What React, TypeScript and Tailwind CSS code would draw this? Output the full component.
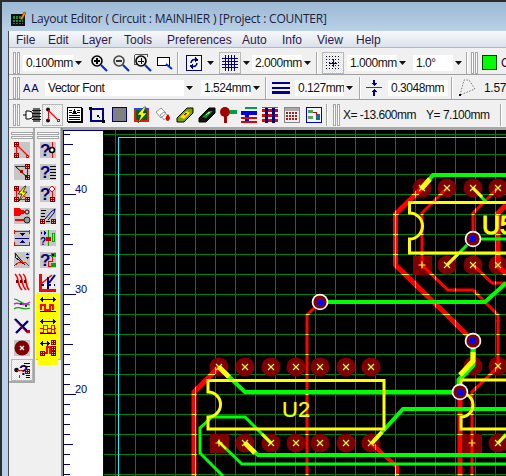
import React from "react";

const font = { fontFamily: '"Liberation Sans", Arial, sans-serif' };

const S = ({ children, w = 16, h = 16, bg, className = "" }: { children?: React.ReactNode; w?: number; h?: number; bg?: string; className?: string }) => (
  <svg width={w} height={h} viewBox={`0 0 ${w} ${h}`} shapeRendering="crispEdges" className={`shrink-0 overflow-visible ${className}`}>
    {bg && <rect width={w} height={h} fill={bg} />}
    {children}
  </svg>
);
const R = ({ x, y, w, h, f }: { x: number; y: number; w: number; h: number; f: string }) => <rect x={x} y={y} width={w} height={h} fill={f} />;
const L = ({ d, c, sw = 1, aa }: { d: string; c: string; sw?: number; aa?: boolean }) => (
  <path d={d} stroke={c} strokeWidth={sw} fill="none" shapeRendering={aa ? "auto" : "crispEdges"} />
);
const Pad = ({ x, y }: { x: number; y: number }) => (
  <g>
    <rect x={x} y={y} width={5} height={5} fill="#800000" />
    <rect x={x + 1} y={y + 1} width={1} height={1} fill="#e0b0b0" />
    <rect x={x + 3} y={y + 1} width={1} height={1} fill="#e0b0b0" />
    <rect x={x + 1} y={y + 3} width={1} height={1} fill="#e0b0b0" />
    <rect x={x + 3} y={y + 3} width={1} height={1} fill="#e0b0b0" />
  </g>
);
const Q = ({ x = 0, y = 14, s = 17 }: { x?: number; y?: number; s?: number }) => (
  <text x={x} y={y} fontFamily="Liberation Sans" fontWeight={700} fontSize={s} fill="#000080" shapeRendering="auto">?</text>
);
const GR = "#c6c6c6";

const leftA: React.ReactNode[] = [
  <S bg={GR}><Pad x={0} y={0} /><Pad x={0} y={11} /><L d="M3 3L14 14" c="#f00" sw={1.3} aa /><L d="M2 3V13" c="#f00" /><R x={12} y={13} w={3} h={3} f="#f00" /><R x={13} y={14} w={1} h={1} f="#fff" /></S>,
  <S bg={GR}><Pad x={11} y={0} /><Pad x={11} y={11} /><L d="M1 2L14 14" c="#000" sw={1} aa /><L d="M1 2H12M13 4V12" c="#333" /><R x={6} y={6} w={3} h={3} f="#a00" /></S>,
  <S bg={GR}><Pad x={0} y={0} /><Pad x={0} y={11} /><Pad x={11} y={11} /><L d="M2 4V12M4 13H12M3 3L12 12" c="#f00" /><path d="M11 0L4 8H8L5 15L13 6H9L12 0Z" fill="#ff0" stroke="#000" strokeWidth={0.7} shapeRendering="auto" /></S>,
  <S bg={GR}><R x={0} y={0} w={6} h={8} f="#f00" /><path d="M6 1L11 3V5L6 7Z" fill="#f00" /><circle cx={13} cy={4} r={2} fill={GR} stroke="#400" shapeRendering="auto" /><R x={1} y={11} w={10} h={2} f="#f00" /><circle cx={13} cy={12} r={3} fill="#999" stroke="#222" shapeRendering="auto" /></S>,
  <S bg={GR}><L d="M0 1H16M0 15H16M0 0V4M15 0V4M0 12V16M15 12V16" c="#f00" /><path d="M8 6L5 3H11ZM8 10L5 13H11Z" fill="#000080" /><L d="M1 8H15" c="#000080" /></S>,
  <S bg={GR}><L d="M1 1L11 13" c="#000" sw={1} aa /><L d="M1 1V5M1 5L11 13" c="#222" /><L d="M0 14L5 10H11L15 14" c="#f00" /><path d="M13 1L11 3H15ZM13 7L11 5H15Z" fill="#000080" /></S>,
  <S><L d="M1 0C6 4 2 10 8 16M5 0C10 4 6 10 12 16M9 0C14 4 10 10 15 16" c="#f00" sw={1.6} aa /><R x={2} y={6} w={2} h={3} f="#700" /><R x={6} y={6} w={2} h={3} f="#700" /><R x={10} y={6} w={2} h={3} f="#700" /></S>,
  <S><L d="M0 3C5 3 7 9 16 9" c="#0a0" sw={1.2} aa /><L d="M0 8C5 5 9 12 16 6" c="#f0f" sw={1.5} aa /><L d="M0 13C5 9 9 15 16 12" c="#0a0" sw={1.2} aa /><R x={6} y={7} w={2} h={2} f="#333" /><R x={11} y={9} w={2} h={2} f="#333" /></S>,
  <S><L d="M1 1L14 14M14 3L2 15" c="#000080" sw={2.4} aa /><L d="M0 1L13 15" c="#f00" sw={0.8} aa /><R x={13} y={12} w={3} h={3} f="#c00" /></S>,
  <S bg={GR}><circle cx={8} cy={8} r={7.5} fill="#800000" shapeRendering="auto" /><L d="M6 6L10 10M10 6L6 10" c="#fff" sw={1.3} aa /></S>,
];
const leftB: React.ReactNode[] = [
  <S bg={GR}><Q /><L d="M12 0V16" c="#f00" /><circle cx={12} cy={8} r={2.5} fill="#fff" stroke="#000" strokeWidth={1.6} shapeRendering="auto" /></S>,
  <S bg={GR}><Q /><L d="M10 2H16M10 5H16M10 8H16M10 11H16M10 14H16" c="#000" /></S>,
  <S bg={GR}><Q /><path d="M12 0L15 3L12 6L9 3Z" fill="#fff" stroke="#f00" /><L d="M12 6V11" c="#f00" /><Pad x={10} y={11} /></S>,
  <S bg={GR}><L d="M1 2H6M1 5H5M1 8H5" c="#000" /><Pad x={0} y={11} /><Pad x={11} y={11} /><L d="M6 13H10" c="#000" /><L d="M5 11L12 3L15 1L14 5L8 12" c="#000080" aa /></S>,
  <S bg={GR}><path d="M0 3L2 1V5ZM6 3L4 1V5Z" fill="#000080" /><Q x={0} y={15} s={10} /><L d="M8 0V16" c="#0a0" /><R x={6} y={7} w={5} h={4} f="#c00" /><R x={12} y={3} w={3} h={9} f="#0a0" /><R x={13} y={4} w={1} h={7} f={GR} /></S>,
  <S bg={GR}><Q /><L d="M9 3H12V9H8V14H12" c="#f00" /><R x={11} y={1} w={5} h={4} f="#0a0" /><R x={11} y={11} w={5} h={4} f="#0a0" /><R x={12} y={2} w={2} h={2} f="#111" /></S>,
  <S bg="#e8e8e8"><L d="M0 0V16H16" c="#f00" sw={3} /><L d="M1 10L12 1" c="#f00" sw={1.5} aa /><L d="M9 9L15 1" c="#000080" sw={2} aa /><L d="M1 11H15M8 3V15" c="#000080" sw={1.5} /><R x={4} y={10} w={3} h={3} f="#fff" /><R x={11} y={10} w={3} h={3} f="#fff" /></S>,
];
const Arrow = ({ w = 16 }: { w?: number }) => (
  <g>
    <R x={2} y={3} w={w - 4} h={1} f="#000" />
    <path d={`M0 3.5L3 0.5V6.5Z M${w} 3.5L${w - 3} 0.5V6.5Z`} fill="#000" />
  </g>
);
const yellow: React.ReactNode[] = [
  <S><Arrow /><L d="M0 15H16" c="#000" /><L d="M1 14V9H5V14H10V9H13V14" c="#f00" sw={1.4} /></S>,
  <S><Arrow /><L d="M0 15H16" c="#000" /><L d="M0 10H3V7H7V10H11V7H14V10H16" c="#f00" /><L d="M0 14H3V11H7V14H11V11H14V14H16" c="#f00" /></S>,
  <S><Arrow w={10} /><Pad x={11} y={0} /><Pad x={11} y={6} /><Pad x={0} y={11} /><Pad x={11} y={11} /><L d="M5 13H7V7H10V13H11" c="#f00" sw={1.4} /></S>,
];
const hotQ = (
  <S><Q x={5} y={13} s={15} /><circle cx={2.5} cy={8} r={2.3} fill="#111" shapeRendering="auto" /><L d="M3 8H9" c="#f00" /><L d="M10 1H16M10 4H16M12 13H16M12 15H16" c="#000" /><Pad x={11} y={7} /><L d="M5 13V16" c="#f00" /></S>
);

const Grip = () => (
  <div className="flex gap-px shrink-0 h-[22px] self-center">
    <div className="w-[3px] border border-[#a6a6a6] bg-white" />
    <div className="w-[3px] border border-[#a6a6a6] bg-white" />
  </div>
);
const HGrip = () => (
  <div className="flex flex-col gap-px w-[22px] self-center mt-[4px] shrink-0">
    <div className="h-[3px] border border-[#a6a6a6] bg-white" />
    <div className="h-[3px] border border-[#a6a6a6] bg-white" />
  </div>
);
const Sep = () => <div className="w-[2px] h-[22px] self-center bg-[#a8a8a8] border-r border-white shrink-0" />;
const Tri = () => (
  <svg width={7} height={4} viewBox="0 0 7 4" className="shrink-0"><path d="M0 0H7L3.5 4Z" fill="#111" /></svg>
);
const Combo = ({ label, w, ml = 0 }: { label: string; w: string; ml?: number }) => (
  <div className={`flex h-[16px] shrink-0 bg-white items-center ${w}`} style={{ marginLeft: ml }}>
    <span className="flex-1 pl-[3px] text-[12px] tracking-[-0.45px] text-[#111] leading-none whitespace-nowrap overflow-hidden">{label}</span>
    <span className="w-[10px] h-full bg-[#f0f0f0] flex items-center justify-center shrink-0"><Tri /></span>
  </div>
);
const Hot = ({ children, w = "w-[22px]", h = "h-[22px]" }: { children: React.ReactNode; w?: string; h?: string }) => (
  <div className={`${w} ${h} shrink-0 flex items-center justify-center border border-[#b8b8b8] bg-[repeating-conic-gradient(#ffffff_0_25%,#e2e2e2_0_50%)] bg-[length:2px_2px]`}>{children}</div>
);
const Lens = ({ mark, c = "#000", extra }: { mark: React.ReactNode; c?: string; extra?: React.ReactNode }) => (
  <S w={18} h={18}>
    {extra}
    <circle cx={7} cy={7} r={5} fill="#e8e8e8" stroke={c} strokeWidth={1.6} shapeRendering="auto" />
    {mark}
    <L d="M11 11L17 17" c="#0033cc" sw={2.2} aa />
  </S>
);

const Row1 = () => (
  <div className="flex items-center h-[25px] mt-[2px] pt-px border-b border-[#a0a0a0] pl-[4px] shrink-0 overflow-hidden">
    <Grip />
    <div className="w-[3px] shrink-0" />
    <Combo label="0.100mm" w="w-[60px]" />
    <div className="flex items-center gap-[4px] ml-[7px]">
      <Lens mark={<L d="M4 7H10M7 4V10" c="#000" sw={1.6} />} />
      <Lens c="#444" mark={<L d="M4 7H10" c="#333" sw={1.6} />} />
      <Lens extra={<L d="M0.5 0.5H13V3M0.5 0.5V10H3" c="#555" />} mark={<L d="M4 7H10M7 4V10" c="#000" />} />
      <S w={18} h={18}><path d="M1 3H13V11H1Z" fill="#fff" stroke="#000" /><L d="M10 10L16 15" c="#0033cc" sw={2} aa /></S>
    </div>
    <div className="ml-[3px]"><Sep /></div>
    <S className="ml-[7px]"><path d="M0.5 0.5H15.5V15.5H0.5Z" fill="#f4f4ff" stroke="#000080" /><L d="M5 8C5 5 8 4 10 5M11 8C11 11 8 12 6 11" c="#000080" sw={1.5} aa /><path d="M9 2L13 5L9 7ZM7 9L3 11L7 14Z" fill="#000080" /></S>
    <div className="ml-[5px] mr-[5px]"><Tri /></div>
    <Hot>
      <S><L d="M3 0V16M6 0V16M9 0V16M12 0V16M0 3H16M0 6H16M0 9H16M0 12H16" c="#000080" /></S>
    </Hot>
    <div className="ml-[2px] mr-[2px]"><Tri /></div>
    <Combo label="2.000mm" w="w-[60px]" />
    <div className="ml-[4px]"><Sep /></div>
    <div className="ml-[4px]"><Hot>
      <svg width={16} height={16} viewBox="0 0 16 16" shapeRendering="crispEdges">
        {[1, 4, 7, 10, 13].flatMap((x) => [1, 4, 7, 10, 13].map((y) => <rect key={`${x}-${y}`} x={x} y={y} width={1} height={1} fill="#000080" />))}
        <L d="M8 4V12M4 8H12" c="#000080" />
      </svg>
    </Hot></div>
    <Combo label="1.000mm" w="w-[60px]" ml={3} />
    <Combo label="1.0°" w="w-[50px]" ml={6} />
    <div className="ml-[3px]"><Sep /></div>
    <div className="ml-[3px]"><Grip /></div>
    <div className="w-[15px] h-[15px] bg-[#00ff00] border border-[#004000] ml-[4px] shrink-0" />
    <span className="ml-[4px] text-[12px] text-[#111] whitespace-nowrap">C</span>
  </div>
);

const Row2 = () => (
  <div className="flex items-center h-[25px] pt-[2px] border-b border-[#a0a0a0] pl-[4px] shrink-0 overflow-hidden">
    <Grip />
    <span className="w-[19px] ml-[3px] shrink-0 text-[11px] tracking-[1px] text-[#000080] leading-none">AA</span>
    <div className="w-[3px] shrink-0" />
    <Combo label="Vector Font" w="w-[149px]" />
    <Combo label="1.524mm" w="w-[60px]" ml={7} />
    <div className="ml-[4px]"><Sep /></div>
    <S w={18} h={14} className="ml-[5px]"><R x={0} y={1} w={18} h={2} f="#000080" /><R x={0} y={6} w={18} h={2} f="#000080" /><R x={0} y={10} w={18} h={3} f="#000080" /></S>
    <Combo label="0.127mm" w="w-[59px]" ml={5} />
    <div className="ml-[5px]"><Sep /></div>
    <S className="ml-[5px]"><R x={0} y={7} w={16} h={1} f="#e00000" /><path d="M8 6L5 3H11Z" fill="#000080" /><R x={7} y={0} w={2} h={3} f="#000080" /><path d="M8 9L5 12H11Z" fill="#000080" /><R x={7} y={12} w={2} h={4} f="#000080" /></S>
    <div className="ml-[6px] h-[16px] w-[60px] bg-white shrink-0 flex items-center pl-[3px] text-[12px] tracking-[-0.45px] text-[#111] leading-none">0.3048mm</div>
    <div className="ml-[3px]"><Sep /></div>
    <S w={18} h={18} className="ml-[5px]"><path d="M2 16L6 1H11L17 10L2 16" fill="none" stroke="#777" strokeDasharray="1.5 1.5" shapeRendering="auto" /><R x={1} y={15} w={2} h={2} f="#000" /></S>
    <span className="ml-[8px] text-[12px] tracking-[-0.3px] text-[#111] leading-none whitespace-nowrap">1.57</span>
  </div>
);

const Row3 = () => (
  <div className="flex items-center h-[27px] pt-[2px] pl-[4px] shrink-0 overflow-hidden">
    <Grip />
    <S w={18} className="ml-[3px]"><path d="M0 8H3M3 4H6A4 4 0 0 1 6 12H3Z" fill="#fff" stroke="#000" shapeRendering="auto" /><R x={10} y={1} w={7} h={14} f="#666" /><L d="M9 3H18M9 6H18M9 9H18M9 12H18" c="#111" /></S>
    <div className="ml-[1px]"><Hot w="w-[21px]">
      <S><circle cx={3} cy={2.5} r={2} fill="#111" shapeRendering="auto" /><circle cx={3} cy={13.5} r={2} fill="#111" shapeRendering="auto" /><L d="M3 3V13" c="#e00" /><L d="M3 3L13 13" c="#e00" sw={1.3} aa /><R x={12} y={12} w={3} h={3} f="#e00" /><R x={13} y={13} w={1} h={1} f="#fff" /></S>
    </Hot></div>
    <S className="ml-[4px]"><path d="M0.5 0.5H14.5V14.5H0.5Z" fill="#fff" stroke="#000" /><R x={15} y={1} w={1} h={15} f="#000" /><R x={1} y={15} w={15} h={1} f="#000" /><path d="M5 7L7.5 2L10 7Z" fill="#000" /><L d="M2 8H13M2 10H13M2 12H13" c="#000" /><L d="M2 3H5M2 5H5M10 3H13M10 5H13" c="#000" /></S>
    <S className="ml-[6px]"><L d="M2 2H14V14H2Z" c="#000080" sw={1.5} /><R x={0} y={0} w={3} h={3} f="#000" /><R x={13} y={13} w={3} h={3} f="#000" /><L d="M8 8L11 11M8 8H10M8 8V10" c="#000" /></S>
    <S w={15} h={15} className="ml-[7px]"><R x={0} y={0} w={15} h={15} f="#000080" /><R x={1} y={1} w={13} h={13} f="#808080" /></S>
    <S w={17} className="ml-[6px]"><R x={1} y={1} w={15} h={14} f="#e02000" /><R x={3} y={3} w={11} h={10} f="#006030" /><L d="M1 1H16" c="#2040ff" /><path d="M11 0L4 8H8L5 16L14 6H10L13 0Z" fill="#ffff00" stroke="#000" strokeWidth={0.5} shapeRendering="auto" /></S>
    <S className="ml-[5px]"><path d="M1 5L6 1L11 6L6 11Z" fill="#fff" stroke="#999" shapeRendering="auto" /><path d="M5 8L9 5L13 9L9 13Z" fill="none" stroke="#999" shapeRendering="auto" /><path d="M13 7C15 10 16 12 13 14C10 14 10 10 13 7Z" fill="#e00000" shapeRendering="auto" /></S>
    <S className="ml-[6px]"><path d="M0 11L10 1H16V6L7 15L0 15Z" fill="#7da000" stroke="#000" shapeRendering="auto" /><path d="M3 10L10 4L13 6L7 12Z" fill="#ffe000" shapeRendering="auto" /><L d="M7 8L10 6" c="#c00" /></S>
    <S className="ml-[6px]"><path d="M0 11L10 1H16V6L7 15L0 15Z" fill="#111" stroke="#000" shapeRendering="auto" /><path d="M3 10L10 4L14 4L7 11Z" fill="#109030" shapeRendering="auto" /><L d="M7 8L11 5" c="#8f8" /></S>
    <S className="ml-[5px]"><circle cx={5} cy={5} r={5} fill="#a00000" shapeRendering="auto" /><R x={4} y={8} w={3} h={8} f="#a00000" /><R x={10} y={3} w={7} h={4} f="#00a040" /></S>
    <S className="ml-[5px]"><R x={4} y={0} w={12} h={2} f="#00a040" /><R x={0} y={4} w={16} h={4} f="#0000e0" /><R x={4} y={4} w={4} h={12} f="#0000e0" /><R x={0} y={10} w={16} h={2} f="#e00000" /><R x={0} y={14} w={16} h={2} f="#e00000" /></S>
    <S className="ml-[5px]"><R x={0} y={2} w={16} h={3} f="#e00000" /><R x={0} y={7} w={16} h={3} f="#e00000" /><R x={0} y={12} w={16} h={3} f="#e00000" /><R x={3} y={0} w={3} h={16} f="#000080" /><R x={10} y={0} w={3} h={16} f="#000080" /><R x={0} y={0} w={16} h={1} f="#00a040" /></S>
    <S className="ml-[6px]"><R x={0} y={0} w={16} h={16} f="#888" /><R x={1} y={1} w={14} h={14} f="#eee" /><R x={1} y={1} w={14} h={3} f="#aaa" />{[3, 6, 9, 12].flatMap((x) => [6, 9, 12].map((y) => <rect key={`${x}-${y}`} x={x - 1} y={y - 1} width={2} height={2} fill="#a02020" />))}</S>
    <S className="ml-[6px]"><path d="M0.5 0.5H15.5V15.5H0.5Z" fill="#f4f4ff" stroke="#0000d0" strokeWidth={1} /><R x={2} y={3} w={5} h={3} f="#50a050" /><R x={2} y={9} w={5} h={3} f="#60a060" /><R x={10} y={7} w={4} h={6} f="#107090" /><L d="M7 5H10V8" c="#c00" /></S>
    <div className="ml-[4px]"><Sep /></div>
    <div className="ml-[5px]"><Grip /></div>
    <div className="ml-[3px] w-[157px] shrink-0 flex gap-[10px] whitespace-nowrap text-[12px] tracking-[-0.5px] text-[#111]">
      <span>X= -13.600mm</span><span>Y= 7.100mm</span>
    </div>
    <Sep />
  </div>
);

/* ---- board ---- */
const gx = Array.from({ length: 20 }, (_, i) => 115 + 20 * i);
const gy = Array.from({ length: 18 }, (_, i) => 134 + 20 * i);
const GridLines = ({ c }: { c: string }) => (
  <g fill={c}>
    {gx.map((x) => <rect key={`v${x}`} x={x} width={1} y={130} height={346} />)}
    {gy.map((y) => <rect key={`h${y}`} y={y} height={1} x={104} width={402} />)}
  </g>
);
const red: [string, number][] = [
  ["M421 189L395.5 214V265L452 320L473 341", 5],
  ["M447 188L422 213V265L448 290H473L498 315V322", 3],
  ["M498 188L473 213V239", 3],
  ["M506 205L498 213V266L506 274", 5],
  ["M473 265L492 283H506", 3],
  ["M498 320V367L472 392V476", 3],
  ["M460 392V476", 5],
  ["M320 302L307 315V476", 3],
  ["M219 367L194 392V476", 5],
  ["M371 443L397 467V476", 4],
];
const green: [string, number][] = [
  ["M506 175H433L422 188", 4],
  ["M473 188L486 202", 3],
  ["M467 245L447 265", 3],
  ["M473 239H506", 3],
  ["M320 302H485L506 283", 4],
  ["M473 341V365L459 380V392", 5],
  ["M219 367L245 392H460", 4],
  ["M372 443L403 409H506", 4],
  ["M245 443L258 455H506", 4],
  ["M218 441L242 464H506", 3],
  ["M271 443L245 417H212L200 428V453L223 476", 3],
  ["M498 443L506 434", 3],
];
const yel: [string, number][] = [
  ["M421 189L430 179", 5],
  ["M473 188L482 197", 3],
  ["M447 265L458 254", 3],
  ["M473 352V361L460 375", 5],
  ["M219 367L229 377", 5],
  ["M372 443L382 432", 4],
  ["M245 443L255 453", 5],
  ["M218 441L226 449", 2],
  ["M271 443L262 434", 3],
  ["M498 443L506 435", 3],
];
const U2x = [219, 245, 271, 296, 320, 346, 371];
const Round = ({ x, y }: { x: number; y: number }) => <circle cx={x} cy={y} r={9.5} fill="#7f0000" />;
const Cross = ({ x, y }: { x: number; y: number }) => (
  <path d={`M${x - 3} ${y - 3}L${x + 3} ${y + 3}M${x + 3} ${y - 3}L${x - 3} ${y + 3}`} stroke="#ffff40" strokeWidth={1.2} fill="none" />
);
const Plus = ({ x, y }: { x: number; y: number }) => (
  <path d={`M${x - 3.5} ${y}H${x + 3.5}M${x} ${y - 3.5}V${y + 3.5}`} stroke="#ffff40" strokeWidth={1.2} fill="none" />
);
const Via = ({ x, y }: { x: number; y: number }) => (
  <g>
    <circle cx={x} cy={y} r={8.3} fill="#fff" />
    <circle cx={x} cy={y} r={6.6} fill="#7f0000" />
    <rect x={x - 3} y={y - 3} width={6} height={6} fill="#0000ff" />
  </g>
);

const Board = () => (
  <svg className="shrink-0 block" width={402} height={346} viewBox="104 130 402 346">
    <rect x={104} y={130} width={402} height={346} fill="#000" />
    <GridLines c="#008000" />
    <rect x={118} y={137} width={388} height={1} fill="#00ffff" />
    <rect x={118} y={137} width={1} height={339} fill="#00ffff" />
    {U2x.map((x) => <Round key={`a${x}`} x={x} y={367} />)}
    {U2x.slice(1).map((x) => <Round key={`b${x}`} x={x} y={443} />)}
    <rect x={210} y={434} width={19} height={19} fill="#7f0000" />
    {[422, 447, 473, 498].map((x) => <Round key={`c${x}`} x={x} y={188} />)}
    {[447, 473, 498].map((x) => <Round key={`d${x}`} x={x} y={265} />)}
    <rect x={413} y={256} width={19} height={19} fill="#7f0000" />
    <rect x={463} y={434} width={19} height={19} fill="#7f0000" />
    <Round x={473} y={366} /><Round x={498} y={366} /><Round x={498} y={443} />
    <mask id="redMask" maskUnits="userSpaceOnUse" x={104} y={130} width={402} height={346}>
      {red.map(([d, w], i) => <path key={i} d={d} stroke="#fff" strokeWidth={w} fill="none" />)}
    </mask>
    {red.map(([d, w], i) => <path key={i} d={d} stroke="#ff0000" strokeWidth={w} fill="none" />)}
    <g mask="url(#redMask)"><GridLines c="#ffff00" /></g>
    {green.map(([d, w], i) => <path key={i} d={d} stroke="#00ff00" strokeWidth={w} fill="none" />)}
    {yel.map(([d, w], i) => <path key={i} d={d} stroke="#ffff00" strokeWidth={w} fill="none" />)}
    <g stroke="#ffff00" strokeWidth={3} fill="none">
      <path d="M384 380.5H208V392A12 12 0 0 1 208 417V429H384Z" />
      <path d="M506 202.5H409.5V213A13 13 0 0 1 409.5 239V253H506" />
      <path d="M506 380H461V393A12 12 0 0 1 461 417V429H506" />
    </g>
    {U2x.map((x) => <Cross key={`e${x}`} x={x} y={367} />)}
    {U2x.slice(1).map((x) => <Cross key={`f${x}`} x={x} y={443} />)}
    <Plus x={219} y={443} />
    {[422, 447, 473, 498].map((x) => <Cross key={`g${x}`} x={x} y={188} />)}
    {[447, 473, 498].map((x) => <Cross key={`h${x}`} x={x} y={265} />)}
    <Plus x={422} y={265} /><Plus x={472} y={443} />
    <Cross x={498} y={366} /><Cross x={498} y={443} />
    <text x={282} y={417} fontFamily="Liberation Sans" fontSize={22} fill="#ffff00" stroke="#ffff00" strokeWidth={0.2}>U2</text>
    <text x={482} y={234} fontFamily="Liberation Sans" fontSize={25} fill="#ffff00" stroke="#ffff00" strokeWidth={1}>U5</text>
    <Via x={473} y={239} /><Via x={473} y={341} /><Via x={460} y={392} /><Via x={320} y={302} />
  </svg>
);

const ticks = Array.from({ length: 35 }, (_, i) => 134 + i * 10);
const Ruler = () => (
  <svg width={41} height={346} viewBox="63 130 41 346" className="shrink-0 block">
    <rect x={63} y={130} width={41} height={346} fill="#fff" />
    <path d="M63 130.5H104M63.5 130V476M103.5 130V476" stroke="#000080" fill="none" shapeRendering="crispEdges" />
    {ticks.map((y) => {
      const k = (y - 144) % 100;
      const m = (y - 194) % 100 === 0;
      const end = m ? 76 : k === 0 ? 73 : 70;
      return <rect key={y} x={63} y={y} width={end - 63} height={1} fill="#000080" />;
    })}
    {([[194, "40"], [294, "30"], [394, "20"]] as [number, string][]).map(([y, t]) => (
      <text key={t} x={75} y={y - 1} fontFamily="Liberation Sans" fontSize={11} fill="#000080">{t}</text>
    ))}
  </svg>
);

const TIcon = ({ children }: { children: React.ReactNode }) => (
  <div className="h-[22px] flex items-center justify-center shrink-0">{children}</div>
);

const LeftBars = () => (
  <div className="flex w-[54px] shrink-0 bg-[#f0f0f0] items-start border-r-2 border-[#8c8c8c] h-full">
    <div className="w-[26px] pl-[2px] shrink-0 flex flex-col items-center border-r-2 border-b-2 border-[#a8a8a8]">
      <HGrip />
      {leftA.map((ic, i) => <TIcon key={i}>{ic}</TIcon>)}
      <Hot>{hotQ}</Hot>
    </div>
    <div className="w-[25px] ml-px shrink-0 flex flex-col items-center border-r border-b border-[#b4b4b4] relative">
      <HGrip />
      {leftB.map((ic, i) => <TIcon key={i}>{ic}</TIcon>)}
      <div className="w-[24px] flex flex-col bg-[#ffff00] relative">
        {yellow.map((ic, i) => <TIcon key={i}>{ic}</TIcon>)}
        <div className="absolute left-[2px] right-[2px] top-full h-[6px] bg-[#ffff00]" />
      </div>
    </div>
  </div>
);

export default function App() {
  const menu: [string, string][] = [
    ["File", "w-[32px]"], ["Edit", "w-[34px]"], ["Layer", "w-[42px]"], ["Tools", "w-[43px]"], ["Preferences", "w-[75px]"],
    ["Auto", "w-[40px]"], ["Info", "w-[35px]"], ["View", "w-[39px]"], ["Help", "w-[40px]"],
  ];
  return (
    <div style={font} className="w-[506px] h-[476px] overflow-hidden flex flex-col bg-[#b9d1ea] border-t-2 border-l-2 border-[#2c2c2c]">
      <div className="h-[29px] shrink-0 flex items-center pl-[9px] pt-[5px] bg-gradient-to-b from-[#9cb8d3] to-[#bad1e7]">
        <S>
          <R x={0} y={3} w={14} h={12} f="#111" />
          <R x={2} y={5} w={10} h={8} f="#109030" />
          <L d="M4 5V13M7 5V13M10 5V13M2 8H12M2 11H12" c="#000" />
          <path d="M9 8L13 1L15 2L11 9Z" fill="#e0a000" stroke="#800" strokeWidth={0.5} shapeRendering="auto" />
        </S>
        <span className="ml-[4px] tracking-[-0.22px] text-[#1a2240] whitespace-nowrap" style={{ fontFamily: '"Open Sans", sans-serif', fontSize: 12 }}>
          Layout Editor ( Circuit : MAINHIER ) [Project : COUNTER]
        </span>
      </div>
      <div className="flex-1 min-h-0 flex pl-[6px]">
        <div className="flex-1 min-w-0 flex flex-col border-l border-[#4a4a4a] bg-[#f0f0f0]">
          <div className="h-[17px] shrink-0 flex items-center pl-[7px] pt-[2px] bg-gradient-to-b from-[#f8f9fb] to-[#dbe1ea] text-[12px] text-[#2a1a50] border-b border-[#b8b8b8]">
            {menu.map(([m, w]) => <span key={m} className={`${w} shrink-0`}>{m}</span>)}
          </div>
          <Row1 />
          <Row2 />
          <Row3 />
          <div className="flex flex-1 min-h-0 border-t border-[#a8a8a8]">
            <LeftBars />
            <div className="flex border-t-2 border-[#a8a8a8]">
              <Ruler />
              <Board />
            </div>
          </div>
        </div>
      </div>
    </div>
  );
}
